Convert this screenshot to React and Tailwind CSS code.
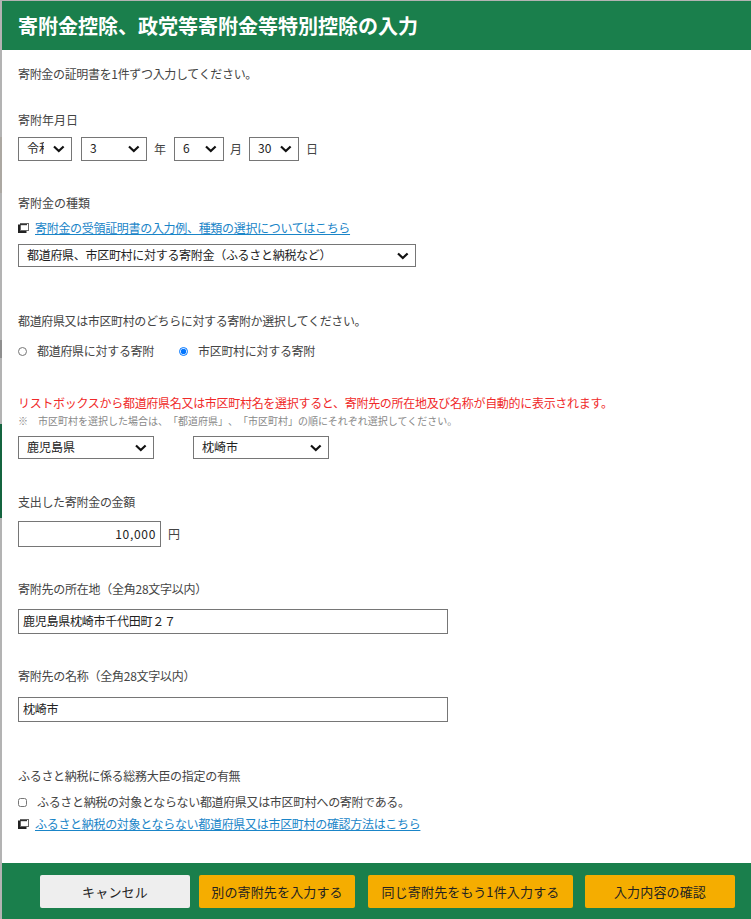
const F = { fontFamily: '"Noto Sans CJK JP", sans-serif' };

function Chevron() {
  return (
    <svg width="12" height="8" viewBox="0 0 12 8" className="absolute right-[7px] top-1/2 -translate-y-1/2 pointer-events-none">
      <path d="M1 1.5 L5.8 6 L10.6 1.5" fill="none" stroke="#111" strokeWidth="2.2" />
    </svg>
  );
}

function Select({ width, value, height = "h-[23px]", className = "pr-[25px]" }) {
  return (
    <div className={`relative shrink-0 ${height} ${width}`}>
      <select
        defaultValue={value}
        className={`appearance-none block w-full h-full border border-[#767676] bg-white pl-[8px] pb-[2px] text-[12px] text-[#222] outline-none ${className}`}
      >
        <option>{value}</option>
      </select>
      <Chevron />
    </div>
  );
}

function Line({ children, className = "" }) {
  return <div className={`h-[18px] leading-[18px] whitespace-nowrap text-[12px] text-[#444] ${className}`}>{children}</div>;
}

function PopIcon() {
  return (
    <svg width="11" height="10" viewBox="0 0 11 10" className="shrink-0">
      <rect x="0" y="1.5" width="8.5" height="8.5" fill="#222" />
      <rect x="2.5" y="0.5" width="8" height="7" fill="#fff" stroke="#666" strokeWidth="1" />
      <rect x="2" y="1" width="7" height="1.2" fill="#333" />
    </svg>
  );
}

function LinkLine({ children, className = "" }) {
  return (
    <div className={`flex items-center h-[18px] ${className}`}>
      <PopIcon />
      <a href="#" className="ml-[6px] text-[12px] leading-[18px] tracking-[-0.31px] text-[#1a85c8] underline whitespace-nowrap">{children}</a>
    </div>
  );
}

function Button({ width, children, tone = "bg-[#f5ad00]" }) {
  return (
    <button className={`h-[33px] ${width} ${tone} rounded-[2px] text-[13px] tracking-[0.15px] text-[#222] flex items-center justify-center whitespace-nowrap`}>
      {children}
    </button>
  );
}

function TextInput({ width, height, value, className = "" }) {
  return (
    <input
      readOnly
      value={value}
      className={`block ${width} ${height} border border-[#767676] bg-white px-[4px] pb-[2px] text-[12px] text-[#222] outline-none ${className}`}
    />
  );
}

export default function App() {
  return (
    <div style={F} className="flex w-[751px] h-[919px] overflow-hidden bg-white [text-spacing-trim:space-all]">
      <div className="w-[2px] h-full shrink-0 flex flex-col bg-[#b3b3b3]">
        <div className="h-[137px]" />
        <div className="h-[56px] bg-[#aca8a2]" />
        <div className="h-[147px]" />
        <div className="h-[18px] bg-[#8f8f8f]" />
        <div className="h-[66px]" />
        <div className="h-[94px] bg-[#14643f]" />
      </div>
      <div className="flex-1 min-w-0 flex flex-col">
        <div className="h-px bg-[#b3b3b3] shrink-0" />
        <div className="h-[49px] shrink-0 bg-[#1a7f4c] flex items-center pl-[16px] text-[20px] font-bold text-white whitespace-nowrap">
          寄附金控除、政党等寄附金等特別控除の入力
        </div>
        <main className="flex-1 flex flex-col pl-[16px]">
          <Line className="mt-[15px] tracking-[-0.33px]">寄附金の証明書を1件ずつ入力してください。</Line>
          <Line className="mt-[28px]">寄附年月日</Line>
          <div className="mt-[8px] flex items-center text-[12px] text-[#444]">
            <Select width="w-[54px]" height="h-[24px]" value="令和" className="pr-[27px]" />
            <div className="w-[9px]" />
            <Select width="w-[66px]" height="h-[24px]" value="3" />
            <span className="ml-[7px] mr-[8px]">年</span>
            <Select width="w-[50px]" height="h-[24px]" value="6" />
            <span className="ml-[6px] mr-[7px]">月</span>
            <Select width="w-[50px]" height="h-[24px]" value="30" />
            <span className="ml-[7px]">日</span>
          </div>
          <Line className="mt-[33px]">寄附金の種類</Line>
          <LinkLine className="mt-[7px]">寄附金の受領証明書の入力例、種類の選択についてはこちら</LinkLine>
          <div className="mt-[7px]">
            <Select width="w-[398px]" className="pr-[25px] tracking-[-0.3px]" value="都道府県、市区町村に対する寄附金（ふるさと納税など）" />
          </div>
          <Line className="mt-[45px] tracking-[-0.37px]">都道府県又は市区町村のどちらに対する寄附か選択してください。</Line>
          <div className="mt-[12px] h-[18px] flex items-center text-[12px] text-[#444] tracking-[-0.3px]">
            <input type="radio" name="kind" className="w-[9px] h-[9px]" />
            <span className="ml-[10px] whitespace-nowrap">都道府県に対する寄附</span>
            <input type="radio" name="kind" defaultChecked className="ml-[25px] w-[9px] h-[9px]" />
            <span className="ml-[10px] whitespace-nowrap">市区町村に対する寄附</span>
          </div>
          <Line className="mt-[34px] tracking-[-0.3px] !text-[#f02a2a]">リストボックスから都道府県名又は市区町村名を選択すると、寄附先の所在地及び名称が自動的に表示されます。</Line>
          <Line className="!text-[10px] !text-[#888]">※　市区町村を選択した場合は、「都道府県」、「市区町村」の順にそれぞれ選択してください。</Line>
          <div className="mt-[6px] flex items-center gap-[39px]">
            <Select width="w-[136px]" value="鹿児島県" />
            <Select width="w-[136px]" value="枕崎市" />
          </div>
          <Line className="mt-[34px] tracking-[-0.3px]">支出した寄附金の金額</Line>
          <div className="mt-[10px] flex items-center text-[12px] text-[#444]">
            <TextInput width="w-[143px]" height="h-[26px]" value="10,000" className="text-right tracking-[0.7px]" />
            <span className="ml-[7px]">円</span>
          </div>
          <Line className="mt-[33px] tracking-[-0.25px]">寄附先の所在地（全角28文字以内）</Line>
          <div className="mt-[11px]">
            <TextInput width="w-[430px]" height="h-[25px]" value="鹿児島県枕崎市千代田町２７" className="tracking-[-0.25px]" />
          </div>
          <Line className="mt-[33px] tracking-[-0.25px]">寄附先の名称（全角28文字以内）</Line>
          <div className="mt-[12px]">
            <TextInput width="w-[430px]" height="h-[25px]" value="枕崎市" className="tracking-[-0.25px]" />
          </div>
          <Line className="mt-[45px] tracking-[-0.3px]">ふるさと納税に係る総務大臣の指定の有無</Line>
          <div className="mt-[8px] h-[18px] flex items-center text-[12px] text-[#444] tracking-[-0.34px]">
            <input type="checkbox" className="w-[9px] h-[9px]" />
            <span className="ml-[10px] whitespace-nowrap">ふるさと納税の対象とならない都道府県又は市区町村への寄附である。</span>
          </div>
          <LinkLine className="mt-[4px]">ふるさと納税の対象とならない都道府県又は市区町村の確認方法はこちら</LinkLine>
        </main>
        <footer className="h-[56px] shrink-0 bg-[#1a7f4c] flex items-start pt-[12px] pl-[38px]">
          <Button width="w-[150px]" tone="bg-[#eeeeee]">キャンセル</Button>
          <Button width="w-[156px] ml-[9px]">別の寄附先を入力する</Button>
          <Button width="w-[205px] ml-[13px]">同じ寄附先をもう1件入力する</Button>
          <Button width="w-[150px] ml-[12px]">入力内容の確認</Button>
        </footer>
      </div>
    </div>
  );
}
